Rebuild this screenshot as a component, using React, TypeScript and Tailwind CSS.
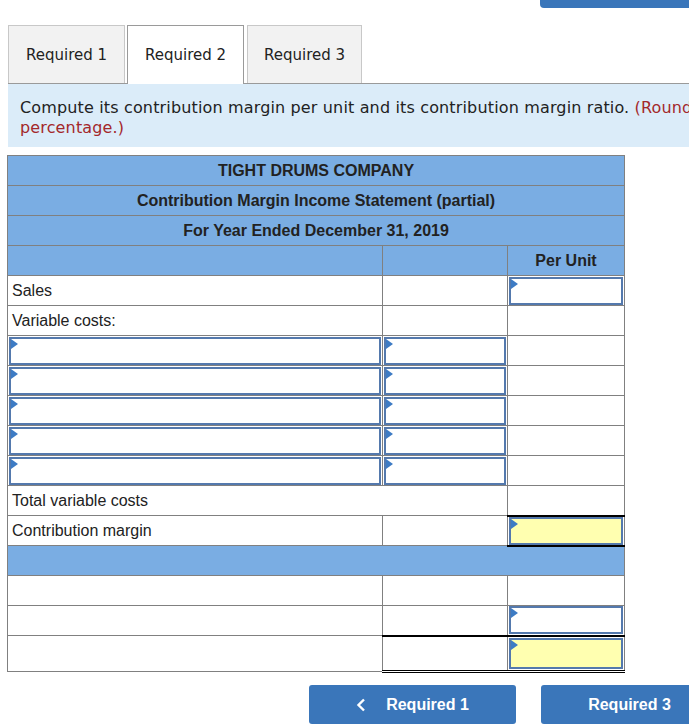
import React from 'react';

const cellBorder = 'border border-[#808080]';

function Flag() {
  return (
    <svg className="absolute left-0 top-0" width="7" height="10" viewBox="0 0 7 10">
      <path d="M0 0 L7 5 L0 10 Z" fill="#3d7bc4" />
    </svg>
  );
}

function InputBox({ yellow = false }: { yellow?: boolean }) {
  return (
    <div
      className={`relative mx-px h-[28px] border-2 border-[#5479ad] ${
        yellow ? 'bg-[#ffffb0]' : 'bg-white'
      }`}
    >
      <Flag />
    </div>
  );
}

export default function App() {
  const labelCell = `${cellBorder} h-[30px] px-1 text-left align-middle`;

  return (
    <div className="relative h-[727px] w-[689px] overflow-hidden bg-white font-['Liberation_Sans',Arial,sans-serif] text-[#222]">
      {/* cut-off button at the top */}
      <div className="absolute left-[540px] top-0 h-[8px] w-[220px] rounded-b-[4px] bg-[#3a76ba]" />

      {/* Tabs */}
      <div className="pl-[8px] pt-[25px]">
        <div className="flex h-[59px] w-[1000px] items-stretch gap-[2px] border-b border-[#9a9a9a] font-['DejaVu_Sans',Verdana,sans-serif] text-[15px]">
          <div className="flex w-[117px] items-center justify-center border border-b-0 border-[#c8c8c8] bg-[#f2f2f2] pt-px">
            Required 1
          </div>
          <div className="relative -mb-px flex w-[117px] items-center justify-center border border-b-0 border-[#9a9a9a] bg-white">
            Required 2
          </div>
          <div className="ml-px flex w-[115px] items-center justify-center border border-b-0 border-[#c8c8c8] bg-[#f2f2f2] pt-px">
            Required 3
          </div>
        </div>

        {/* Instructions */}
        <div className="h-[63px] w-[1000px] bg-[#dbecf9] pl-[12px] pt-[14px] font-['DejaVu_Sans',Verdana,sans-serif] text-[16px] leading-[20px] tracking-[0.15px] text-[#222]">
          <div className="whitespace-nowrap">
            Compute its contribution margin per unit and its contribution margin ratio.{' '}
            <span className="text-[#a3282b]">(Round your contribution margin ratio to the nearest whole</span>
          </div>
          <div className="text-[#a3282b]">percentage.)</div>
        </div>
      </div>

      {/* Statement table */}
      <div className="pl-[7px] pt-[8px]">
        <table className="w-[617px] table-fixed border-collapse text-[16px]">
          <colgroup>
            <col className="w-[375px]" />
            <col className="w-[125px]" />
            <col className="w-[117px]" />
          </colgroup>
          <tbody>
            <tr className="bg-[#7aade3] font-bold">
              <td colSpan={3} className={`${cellBorder} h-[30px] text-center`}>
                TIGHT DRUMS COMPANY
              </td>
            </tr>
            <tr className="bg-[#7aade3] font-bold">
              <td colSpan={3} className={`${cellBorder} h-[30px] text-center`}>
                Contribution Margin Income Statement (partial)
              </td>
            </tr>
            <tr className="bg-[#7aade3] font-bold">
              <td colSpan={3} className={`${cellBorder} h-[30px] text-center`}>
                For Year Ended December 31, 2019
              </td>
            </tr>
            <tr className="bg-[#7aade3] font-bold">
              <td className={`${cellBorder} h-[30px]`} />
              <td className={`${cellBorder} h-[30px]`} />
              <td className={`${cellBorder} h-[30px] text-center`}>Per Unit</td>
            </tr>

            <tr>
              <td className={labelCell}>Sales</td>
              <td className={`${cellBorder} h-[30px]`} />
              <td className={`${cellBorder} h-[30px] p-0`}>
                <InputBox />
              </td>
            </tr>
            <tr>
              <td className={labelCell}>Variable costs:</td>
              <td className={`${cellBorder} h-[30px]`} />
              <td className={`${cellBorder} h-[30px]`} />
            </tr>

            {[0, 1, 2, 3, 4].map((i) => (
              <tr key={i}>
                <td className={`${cellBorder} h-[30px] p-0`}>
                  <InputBox />
                </td>
                <td className={`${cellBorder} h-[30px] p-0`}>
                  <InputBox />
                </td>
                <td className={`${cellBorder} h-[30px]`} />
              </tr>
            ))}

            <tr>
              <td colSpan={2} className={labelCell}>
                Total variable costs
              </td>
              <td className={`${cellBorder} h-[30px]`} />
            </tr>
            <tr>
              <td className={labelCell}>Contribution margin</td>
              <td className={`${cellBorder} h-[30px]`} />
              <td className="h-[30px] border-x border-y-2 border-x-[#808080] border-y-black p-0">
                <InputBox yellow />
              </td>
            </tr>

            <tr className="bg-[#7aade3]">
              <td colSpan={3} className={`${cellBorder} h-[30px]`} />
            </tr>

            <tr>
              <td className={`${cellBorder} h-[30px]`} />
              <td className={`${cellBorder} h-[30px]`} />
              <td className={`${cellBorder} h-[30px]`} />
            </tr>
            <tr>
              <td className={`${cellBorder} h-[30px]`} />
              <td className={`${cellBorder} h-[30px]`} />
              <td className={`${cellBorder} h-[30px] p-0`}>
                <InputBox />
              </td>
            </tr>
            <tr>
              <td className={`${cellBorder} h-[36px]`} />
              <td className="h-[36px] border-x border-t-2 border-b-[3px] border-x-[#808080] border-t-black border-b-black [border-bottom-style:double]" />
              <td className="h-[36px] border-x border-t-2 border-b-[3px] border-x-[#808080] border-t-black border-b-black p-0 [border-bottom-style:double]">
                <div className="relative mx-px h-[31px] border-2 border-[#5479ad] bg-[#ffffb0]">
                  <Flag />
                </div>
              </td>
            </tr>
          </tbody>
        </table>
      </div>

      {/* Navigation buttons */}
      <div className="flex gap-[25px] pl-[309px] pt-[12px]">
        <button className="flex h-[39px] w-[207px] shrink-0 items-center justify-center gap-[20px] rounded-[3px] bg-[#3a76ba] text-[16px] font-bold text-white">
          <svg width="10" height="14" viewBox="0 0 10 14">
            <path d="M8 1.5 L2.5 7 L8 12.5" fill="none" stroke="white" strokeWidth="2.4" />
          </svg>
          Required 1
        </button>
        <button className="flex h-[39px] w-[207px] shrink-0 items-center justify-center gap-[20px] rounded-[3px] bg-[#3a76ba] text-[16px] font-bold text-white">
          Required 3
          <svg width="10" height="14" viewBox="0 0 10 14">
            <path d="M2 1.5 L7.5 7 L2 12.5" fill="none" stroke="white" strokeWidth="2.4" />
          </svg>
        </button>
      </div>
    </div>
  );
}
